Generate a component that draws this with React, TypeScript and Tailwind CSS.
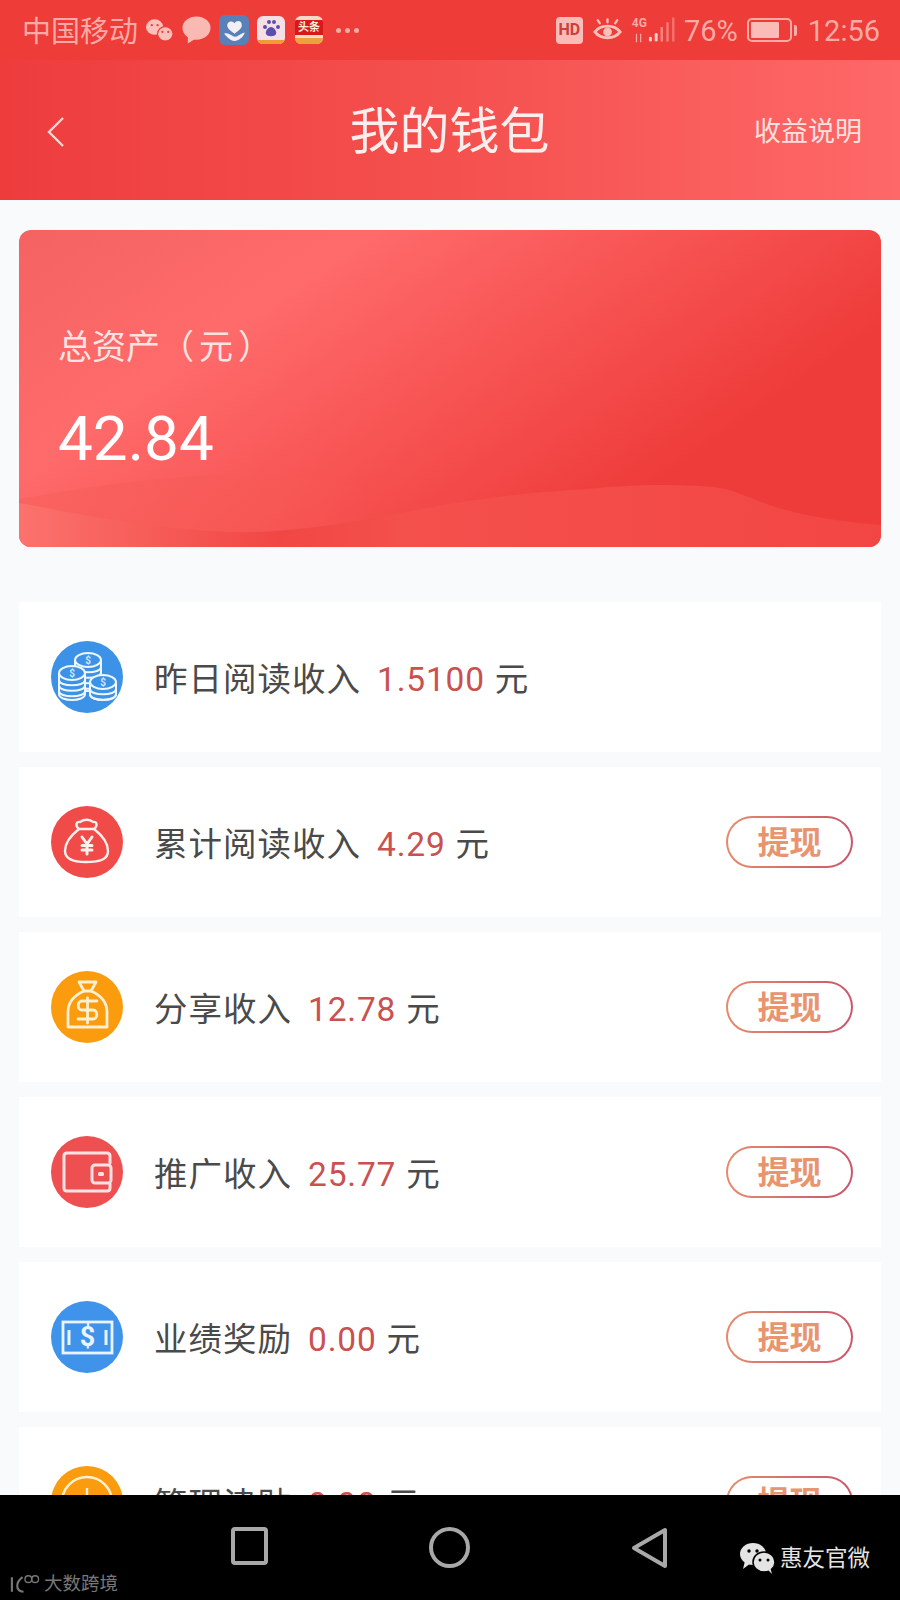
const cjk = "font-['Roboto','Noto_Sans_CJK_SC',sans-serif]";

function CoinStack({ cx, top, bottom }: { cx: number; top: number; bottom: number }) {
  const bands: number[] = [];
  for (let y = top + 7; y <= bottom - 5; y += 5.5) bands.push(y);
  return (
    <g>
      <path
        d={`M${cx - 13} ${top}V${bottom - 6}C${cx - 13} ${bottom + 2} ${cx + 13} ${bottom + 2} ${cx + 13} ${bottom - 6}V${top}`}
        fill="#3c92e6"
        stroke="#eef7ff"
        strokeWidth="2"
      />
      {bands.map((y) => (
        <path key={y} d={`M${cx - 13} ${y}C${cx - 13} ${y + 7} ${cx + 13} ${y + 7} ${cx + 13} ${y}`} fill="none" stroke="#eef7ff" strokeWidth="2" />
      ))}
      <ellipse cx={cx} cy={top} rx="13" ry="7" fill="#3c92e6" stroke="#eef7ff" strokeWidth="2" />
      <text x={cx} y={top + 3.5} textAnchor="middle" fontSize="10" fontWeight="700" fill="#cfe6fb" fontFamily="Roboto">
        $
      </text>
    </g>
  );
}

function CoinsIcon() {
  return (
    <svg viewBox="0 0 72 72" className="h-full w-full">
      <CoinStack cx={37} top={19} bottom={50} />
      <CoinStack cx={21} top={32} bottom={59} />
      <CoinStack cx={52} top={41} bottom={59} />
    </svg>
  );
}

function YenBagIcon() {
  return (
    <svg viewBox="0 0 72 72" className="h-full w-full" fill="none" stroke="#fff0ee" strokeWidth="2.4" strokeLinecap="round" strokeLinejoin="round">
      <path d="M28 23C24 20 25 15 29 16C33 13 39 13 42 16C46 15 47 20 43 23Z" />
      <path d="M28 23C19 30 14 37 14 45C14 53 21 56 35 56C50 56 57 53 57 45C57 37 52 30 43 23" />
      <path d="M31 31L36 38L41 31M36 38V48M31 39.5H41M31 44H41" strokeWidth="3" />
    </svg>
  );
}

function DollarBagIcon() {
  return (
    <svg viewBox="0 0 72 72" className="h-full w-full" fill="none" stroke="#fdf0d0" strokeWidth="2.8" strokeLinecap="round" strokeLinejoin="round">
      <path d="M28 11H45L40 20H33Z" />
      <path d="M33 20C24 24 17 31 17 41V56H56V41C56 31 49 24 40 20" />
      <path d="M46 30H31C26 30 26 39 31 39H42C47 39 47 48 42 48H27M36.5 27V52" />
    </svg>
  );
}

function WalletIcon() {
  return (
    <svg viewBox="0 0 72 72" className="h-full w-full" fill="none" stroke="#ffe3e3" strokeWidth="3" strokeLinecap="round" strokeLinejoin="round">
      <path d="M59 27V20C59 18 58 17 56 17H16C14 17 13 18 13 20V52C13 54 14 55 16 55H56C58 55 59 54 59 52V48" />
      <rect x="41" y="29" width="19" height="18" rx="3" />
      <rect x="47" y="36" width="6" height="4" rx="1.5" fill="#ffe3e3" stroke="none" />
    </svg>
  );
}

function BillIcon() {
  return (
    <svg viewBox="0 0 72 72" className="h-full w-full" fill="none" stroke="#eaf4ff" strokeWidth="2.8">
      <rect x="12" y="21" width="49" height="31" />
      <path d="M18 29V44M55 29V44" strokeWidth="3" />
      <text x="36.5" y="45" textAnchor="middle" fontSize="27" fontWeight="700" fill="#eaf4ff" stroke="none" fontFamily="Roboto">
        $
      </text>
    </svg>
  );
}

function ClockCoinIcon() {
  return (
    <svg viewBox="0 0 72 72" className="h-full w-full" fill="none" stroke="#fdf0d0" strokeWidth="2.4">
      <circle cx="36" cy="36" r="25" />
      <path d="M36 22V30" />
    </svg>
  );
}

function WeChatIcon({ className }: { className: string }) {
  return (
    <svg viewBox="0 0 36 32" className={className} fill="currentColor">
      <ellipse cx="14" cy="12" rx="13" ry="11" />
      <path d="M6 19L4 27L12 21Z" />
      <ellipse cx="25" cy="20" rx="11" ry="10" stroke="black" strokeWidth="1.5" />
      <path d="M29 28L33 32L31 25Z" />
      <circle cx="10" cy="9" r="1.7" fill="black" />
      <circle cx="18" cy="9" r="1.7" fill="black" />
      <circle cx="21" cy="18" r="1.5" fill="black" />
      <circle cx="29" cy="18" r="1.5" fill="black" />
    </svg>
  );
}

function StatusBar() {
  return (
    <div className="flex h-[60px] shrink-0 items-center bg-[#ee3c38] pl-[22px] pr-[20px] text-[#fbaaa5]">
      <span className="pt-[4px] text-[29px] leading-none">中国移动</span>
      <svg viewBox="0 0 30 26" className="ml-[7px] h-[26px] w-[29px]" fill="#fbc0ba">
        <ellipse cx="10" cy="10" rx="9" ry="8" />
        <ellipse cx="21" cy="17" rx="8" ry="7.5" stroke="#ee3c38" strokeWidth="1.2" />
        <circle cx="7" cy="8" r="1.2" fill="#ee3c38" />
        <circle cx="13" cy="8" r="1.2" fill="#ee3c38" />
        <circle cx="18" cy="15" r="1.1" fill="#ee3c38" />
        <circle cx="24" cy="15" r="1.1" fill="#ee3c38" />
      </svg>
      <svg viewBox="0 0 30 28" className="ml-[8px] h-[28px] w-[29px]" fill="#fbb9b4">
        <ellipse cx="15" cy="12" rx="14.5" ry="12" />
        <path d="M6 20L6 28L14 23Z" />
      </svg>
      <div className="ml-[8px] flex h-[30px] w-[30px] items-center justify-center rounded-[6px] bg-[#5a80b8]">
        <svg viewBox="0 0 24 24" className="h-[25px] w-[25px]" fill="#f2f0f4">
          <path d="M12 15C8 12 5 10 5 7C5 3 10 2 12 5C14 2 19 2 19 7C19 10 16 12 12 15Z" />
          <path d="M2 15C6 13 10 18 13 18C15 18 18 15 22 14C20 19 16 22 12 22C8 22 5 18 2 15Z" />
        </svg>
      </div>
      <div className="ml-[8px] flex h-[28px] w-[28px] flex-col items-center justify-between overflow-hidden rounded-[6px] bg-[#f6dfe4]">
        <svg viewBox="0 0 20 20" className="mt-[2px] h-[20px] w-[20px]" fill="#5a4fb0">
          <circle cx="4" cy="9" r="2" />
          <circle cx="8" cy="4" r="2" />
          <circle cx="13" cy="4" r="2" />
          <circle cx="17" cy="9" r="2" />
          <path d="M10 9C7 9 4 13 5 16C6 19 14 19 15 16C16 13 13 9 10 9Z" />
        </svg>
        <div className="h-[4px] w-full bg-[#ef9a3c]" />
      </div>
      <div className="ml-[10px] flex h-[28px] w-[28px] flex-col items-center overflow-hidden rounded-[6px] bg-[#f7d9c8]">
        <div className="mt-[4px] flex h-[15px] w-full items-center justify-center bg-[#d8191c] text-[11px] font-bold leading-none text-[#ffeed8]">
          头条
        </div>
        <div className="mt-auto h-[6px] w-full bg-[#e9a23c]" />
      </div>
      <div className="ml-[13px] flex gap-[4px]">
        <span className="h-[5px] w-[5px] rounded-full bg-[#fbaaa5]" />
        <span className="h-[5px] w-[5px] rounded-full bg-[#fbaaa5]" />
        <span className="h-[5px] w-[5px] rounded-full bg-[#fbaaa5]" />
      </div>
      <div className="ml-auto flex h-[27px] w-[27px] items-center justify-center rounded-[4px] bg-[#fbbcb8] text-[16px] font-bold leading-none text-[#c9403c]">
        HD
      </div>
      <svg viewBox="0 0 32 24" className="ml-[9px] h-[24px] w-[31px]" fill="none" stroke="#fbc0ba" strokeWidth="3" strokeLinecap="round">
        <path d="M3 14C9 6 23 6 29 14C23 22 9 22 3 14Z" />
        <circle cx="16" cy="14" r="4.5" fill="#fbc0ba" stroke="none" />
        <path d="M8 5L6 2M16 4V1M24 5L26 2" strokeWidth="2.4" />
      </svg>
      <div className="ml-[9px] flex items-center gap-[1px]">
        <div className="flex flex-col items-center text-[12px] font-bold leading-none">
          <span>4G</span>
          <svg viewBox="0 0 14 12" className="mt-[4px] h-[10px] w-[14px]" stroke="currentColor" strokeWidth="1.5">
            <path d="M4 1V11M9 1V11" />
          </svg>
        </div>
        <svg viewBox="0 0 28 28" className="h-[28px] w-[27px]" fill="currentColor">
          <rect x="1" y="21" width="3" height="5" rx="1.5" fill="#fcd0cc" />
          <rect x="7" y="17" width="3" height="9" rx="1.5" fill="#fcd0cc" />
          <rect x="13" y="11" width="2.5" height="15" opacity="0.7" />
          <rect x="19" y="6" width="2.5" height="20" opacity="0.6" />
          <rect x="25" y="1" width="2.5" height="25" opacity="0.5" />
        </svg>
      </div>
      <span className="ml-[9px] pt-[3px] text-[29px] leading-none">76%</span>
      <div className="ml-[9px] flex items-center gap-[2px]">
        <div className="h-[24px] w-[45px] rounded-[5px] border-[2px] border-[#fbaaa5] p-[2px]">
          <div className="h-full w-[76%] rounded-[1px] bg-[#fbbcb8]" />
        </div>
        <div className="h-[11px] w-[3px] rounded-r-[2px] bg-[#fbaaa5]" />
      </div>
      <span className="ml-[11px] pt-[3px] text-[29px] leading-none">12:56</span>
    </div>
  );
}

function Header() {
  return (
    <div className="flex h-[140px] shrink-0 items-center justify-between bg-linear-to-r from-[#ee3c3d] via-[#f4504e] to-[#fe6868] px-[38px] pt-[4px] text-[#fdeeee]">
      <svg viewBox="0 0 20 32" className="ml-[8px] h-[32px] w-[20px]" fill="none" stroke="#fdd8d8" strokeWidth="2.4">
        <path d="M17 2L3 16L17 30" />
      </svg>
      <span className="ml-[79px] text-[50px] leading-none">我的钱包</span>
      <span className="text-[27px] leading-none text-[#fde0e0]">收益说明</span>
    </div>
  );
}

function AssetCard() {
  return (
    <div className="relative mx-[19px] mt-[30px] h-[317px] overflow-hidden rounded-[12px] bg-linear-[145deg] from-[#f46262] via-[#ff6b6b] via-26% to-[#ee3c3a] to-76% px-[39px] pt-[97px] text-white">
      <svg viewBox="0 0 862 120" preserveAspectRatio="none" className="absolute inset-x-0 bottom-0 h-[120px] w-full">
        <defs>
          <linearGradient id="backWave" x1="0" x2="1" y1="0" y2="0">
            <stop offset="0" stopColor="#f8625d" stopOpacity="0.75" />
            <stop offset="0.35" stopColor="#f65a56" stopOpacity="0.55" />
            <stop offset="0.65" stopColor="#f65a56" stopOpacity="0" />
          </linearGradient>
          <linearGradient id="frontWave" x1="0" x2="1" y1="0" y2="0">
            <stop offset="0" stopColor="#fc726d" />
            <stop offset="0.3" stopColor="#f14744" />
            <stop offset="0.45" stopColor="#f4504c" />
            <stop offset="1" stopColor="#f24644" />
          </linearGradient>
        </defs>
        <path d="M0 72C80 58 160 46 239 48C300 50 340 60 400 76C450 88 500 95 560 120H0Z" fill="url(#backWave)" />
        <path d="M0 76C35 82 60 88 96 93C150 102 200 106 239 105C290 103 340 94 383 86C440 74 500 66 555 63C590 60 615 58 641 58C680 58 705 60 716 65C735 72 745 76 756 80C790 90 825 95 862 98V120H0Z" fill="url(#frontWave)" />
      </svg>
      <div className="relative">
        <div className="text-[34px] leading-[40px] text-[#fde3e3]">
          总资产（<span className="mx-[5px]">元</span>）
        </div>
        <div className="mt-[41px] text-[62px] leading-[62px]">42.84</div>
      </div>
    </div>
  );
}

const rows = [
  { icon: <CoinsIcon />, bg: "bg-[#3c92e6]", label: "昨日阅读收入", value: "1.5100", withdraw: false },
  { icon: <YenBagIcon />, bg: "bg-[#f04b48]", label: "累计阅读收入", value: "4.29", withdraw: true },
  { icon: <DollarBagIcon />, bg: "bg-[#fb9c0e]", label: "分享收入", value: "12.78", withdraw: true },
  { icon: <WalletIcon />, bg: "bg-[#ee4f50]", label: "推广收入", value: "25.77", withdraw: true },
  { icon: <BillIcon />, bg: "bg-[#3f93ea]", label: "业绩奖励", value: "0.00", withdraw: true },
  { icon: <ClockCoinIcon />, bg: "bg-[#fb9c0e]", label: "管理津贴", value: "0.00", withdraw: true },
];

function IncomeRow({ row }: { row: (typeof rows)[number] }) {
  return (
    <div className="flex h-[150px] shrink-0 items-center bg-white pl-[32px] pr-[28px]">
      <div className={`h-[72px] w-[72px] shrink-0 rounded-full ${row.bg}`}>{row.icon}</div>
      <div className="ml-[31px] flex items-baseline pt-[6px] text-[33.5px] leading-none text-[#4a4a4a]">
        <span className="tracking-[1px]">{row.label}</span>
        <span className="ml-[16px] tracking-[0.8px] text-[#c9514f]">{row.value}</span>
        <span className="ml-[10px]">元</span>
      </div>
      {row.withdraw && (
        <div className="ml-auto h-[52px] w-[127px] rounded-full bg-linear-to-r from-[#e58a6c] to-[#c9566a] p-[2px]">
          <div className="flex h-full w-full items-center justify-center rounded-full bg-white pt-[2px] text-[32px] font-bold leading-none text-[#e8946e]">
            提现
          </div>
        </div>
      )}
    </div>
  );
}

function NavBar() {
  return (
    <div className="relative flex h-[105px] shrink-0 items-start bg-black pl-[231px] pt-[32px]">
      <div className="h-[38px] w-[37px] rounded-[4px] border-[4px] border-[#a8a8a8]" />
      <div className="ml-[161px] h-[41px] w-[41px] rounded-full border-[4px] border-[#a8a8a8]" />
      <svg viewBox="0 0 36 42" className="ml-[161px] h-[42px] w-[36px]" fill="none" stroke="#a8a8a8" strokeWidth="4" strokeLinejoin="round">
        <path d="M34 3V39L3 21Z" />
      </svg>
      <div className="absolute left-[739px] top-[47px] flex items-center gap-[5px] text-[#e4e4e4]">
        <WeChatIcon className="h-[32px] w-[36px]" />
        <span className="text-[22.5px] leading-none">惠友官微</span>
      </div>
      <div className="absolute left-[9px] top-[79px] flex items-center gap-[4px] text-[#777777]">
        <svg viewBox="0 0 32 20" className="h-[20px] w-[31px]" fill="none" stroke="currentColor" strokeWidth="2.2">
          <path d="M3 3V18M14 3C7 8 6 17 15 18" />
          <circle cx="20" cy="5" r="3.5" strokeWidth="1.4" />
          <circle cx="27" cy="5" r="3.5" strokeWidth="1.4" />
        </svg>
        <span className="text-[18.5px] leading-none">大数跨境</span>
      </div>
    </div>
  );
}

export default function App() {
  return (
    <div className={`flex h-[1600px] w-[900px] flex-col overflow-hidden bg-[#f9fafc] ${cjk}`}>
      <StatusBar />
      <Header />
      <div className="min-h-0 flex-1 overflow-hidden">
        <AssetCard />
        <div className="mx-[19px] mt-[55px] flex flex-col gap-[15px]">
          {rows.map((row) => (
            <IncomeRow key={row.label} row={row} />
          ))}
        </div>
      </div>
      <NavBar />
    </div>
  );
}
